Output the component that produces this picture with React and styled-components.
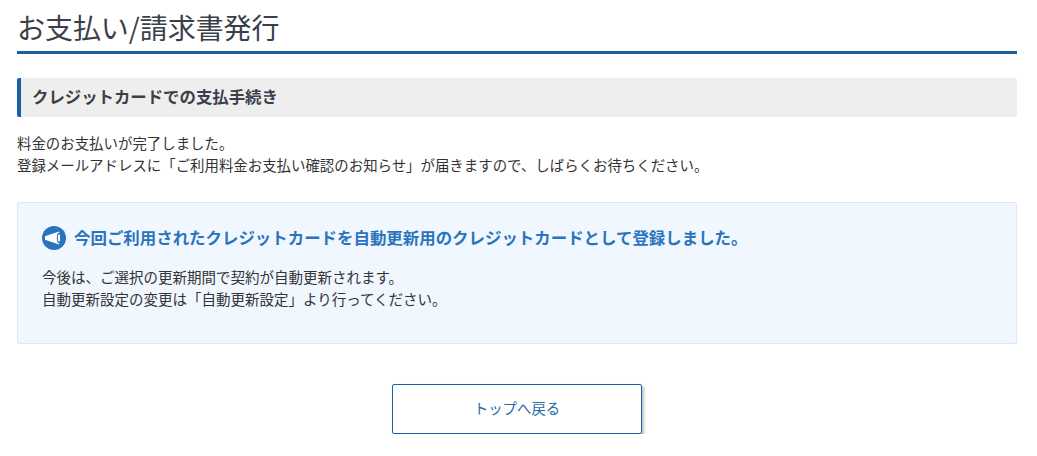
import React from "react";
import styled, { createGlobalStyle } from "styled-components";

const GlobalStyle = createGlobalStyle`
  html, body {
    margin: 0;
    padding: 0;
    background: #fff;
  }
  body {
    font-family: "Noto Sans CJK JP", "Noto Sans", sans-serif;
    color: #333;
  }
`;

const Page = styled.div`
  width: 1000px;
  margin-left: 17px;
`;

const Title = styled.h1`
  margin: 0;
  height: 51px;
  border-bottom: 3px solid #1d5fa3;
  font-size: 28px;
  font-weight: 400;
  line-height: 55px;
  letter-spacing: -0.05px;
  color: #3a3f4a;
`;

const SubTitle = styled.h2`
  margin: 24px 0 0;
  height: 39px;
  padding-left: 11px;
  border-left: 4px solid #1d5fa3;
  border-radius: 2px;
  background: #eee;
  font-size: 16.4px;
  font-weight: 700;
  line-height: 37px;
  color: #3a3f4a;
`;

const Message = styled.p`
  margin: 15px 0 0;
  font-size: 14.43px;
  line-height: 22px;
`;

const Notice = styled.section`
  box-sizing: border-box;
  height: 142px;
  margin-top: 26px;
  padding: 20px 24px;
  border: 1px solid #dde8f3;
  border-radius: 2px;
  background: #f0f7ff;
`;

const NoticeHead = styled.div`
  display: flex;
  align-items: center;
  gap: 8px;
  height: 30px;
`;

const NoticeTitle = styled.h3`
  margin: 0;
  padding-bottom: 2px;
  font-size: 16.45px;
  font-weight: 700;
  color: #2a74bd;
`;

const NoticeText = styled.p`
  margin: 13px 0 0;
  font-size: 14.5px;
  line-height: 22px;
`;

const Actions = styled.div`
  display: flex;
  justify-content: center;
  margin-top: 40px;
`;

const BackButton = styled.button`
  width: 250px;
  height: 50px;
  padding: 0 0 4px;
  border: 1px solid #1d5fa3;
  border-radius: 2px;
  background: #fff;
  box-shadow: 2px 2px 3px rgba(0, 0, 0, 0.25);
  font-family: inherit;
  font-size: 14.4px;
  color: #2a69a8;
  cursor: pointer;
`;

const MegaphoneIcon = () => (
  <svg width="24" height="24" viewBox="0 0 24 24" aria-hidden="true">
    <circle cx="12" cy="12" r="12" fill="#2a74bd" />
    <path d="M3 10.2 L17 5.6 Q20 12 17 18.4 L3 13.8 Z" fill="#fff" />
    <ellipse cx="17" cy="12" rx="2.2" ry="5.6" fill="#2a74bd" />
    <ellipse cx="17" cy="12" rx="1.1" ry="3.8" fill="#fff" />
  </svg>
);

export default function App() {
  return (
    <Page>
      <GlobalStyle />
      <Title>お支払い/請求書発行</Title>
      <SubTitle>クレジットカードでの支払手続き</SubTitle>
      <Message>
        料金のお支払いが完了しました。
        <br />
        登録メールアドレスに「ご利用料金お支払い確認のお知らせ」が届きますので、しばらくお待ちください。
      </Message>
      <Notice>
        <NoticeHead>
          <MegaphoneIcon />
          <NoticeTitle>今回ご利用されたクレジットカードを自動更新用のクレジットカードとして登録しました。</NoticeTitle>
        </NoticeHead>
        <NoticeText>
          今後は、ご選択の更新期間で契約が自動更新されます。
          <br />
          自動更新設定の変更は「自動更新設定」より行ってください。
        </NoticeText>
      </Notice>
      <Actions>
        <BackButton>トップへ戻る</BackButton>
      </Actions>
    </Page>
  );
}
